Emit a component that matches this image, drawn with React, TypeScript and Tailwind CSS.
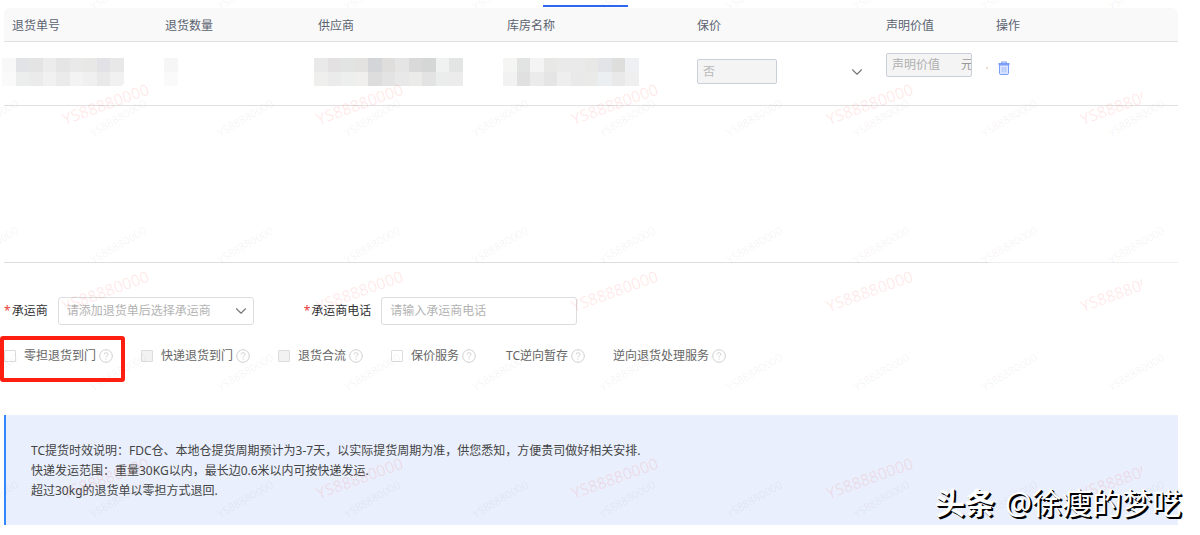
import React from 'react';
import { ChevronDown } from 'lucide-react';

const WATERMARK = 'YS88880000';

const idTiles = [
  '#f8f8f8', '#e2e3e6', '#e4e4e5', '#ececec', '#e5e5e5', '#e9e9e9', '#e8e8e7', '#e2e2e6', '#e8e8e8',
  '#fafafa', '#eceeee', '#ebebec', '#f1f1f1', '#ebebeb', '#f3f3f3', '#f0f0f0', '#e9e9e9', '#f1f1f1',
];
const qtyTiles = ['#f6f6f6', '#fafafa'];
const supplierTiles = [
  '#e9e9e9', '#e3e1e2', '#e1e4e3', '#e3e2e0', '#d4d5d8', '#dfdedc', '#e5e5e5', '#d9d9d9', '#d5d6d6', '#f0f1f1', '#e3e5e5',
  '#efefee', '#ebebeb', '#ecefee', '#f0efed', '#dddddd', '#e3e3e3', '#e8e8e9', '#ebebe9', '#e3e3e3', '#ebedec', '#ececec',
];
const warehouseTiles = [
  '#f5f5f4', '#e2e4e4', '#f4f4f5', '#e8e8e6', '#eaeaea', '#eaeaea', '#e8e8e6', '#e2e4e7', '#dededc', '#eff0f3',
  '#f2f2f2', '#e0e0e0', '#ebebeb', '#e5e5e5', '#eeeeee', '#e9e9e9', '#eaeae9', '#eceff1', '#e9e9e9', '#efefef',
];

const columns = [
  { title: '退货单号', width: 'w-[153px]' },
  { title: '退货数量', width: 'w-[153px]' },
  { title: '供应商', width: 'w-[189px]' },
  { title: '库房名称', width: 'w-[190px]' },
  { title: '保价', width: 'w-[189px]' },
  { title: '声明价值', width: 'w-[110px]' },
  { title: '操作', width: 'w-[190px]' },
];

const services = [
  { label: '零担退货到门', gap: 'mr-7', box: 'bg-white' },
  { label: '快递退货到门', gap: 'mr-7', box: 'bg-[#f2f2f2]' },
  { label: '退货合流', gap: 'mr-7', box: 'bg-[#f2f2f2]' },
  { label: '保价服务', gap: 'mr-[30px]', box: 'bg-white' },
  { label: 'TC逆向暂存', gap: 'mr-7', box: '' },
  { label: '逆向退货处理服务', gap: '', box: '' },
];

function Mosaic({ tiles, className }: { tiles: string[]; className: string }) {
  return (
    <div className={`grid h-7 grid-rows-2 overflow-hidden ${className}`}>
      {tiles.map((color, i) => (
        <span key={i} style={{ backgroundColor: color }} />
      ))}
    </div>
  );
}

function HelpIcon() {
  return (
    <svg viewBox="0 0 14 14" className="h-3.5 w-3.5 shrink-0" fill="none" stroke="#cfcfcf" aria-hidden="true">
      <circle cx="7" cy="7" r="6.3" />
      <path d="M5.1 5.6c0-1.2.8-1.9 1.9-1.9s1.9.7 1.9 1.7c0 1.3-1.9 1.4-1.9 2.8" />
      <path d="M7 9.3v1.2" />
    </svg>
  );
}

function TrashIcon() {
  return (
    <svg viewBox="0 0 12 14" className="h-3.5 w-3" fill="none" aria-hidden="true">
      <path d="M1.5 4h9v8.2a1.3 1.3 0 0 1-1.3 1.3H2.8a1.3 1.3 0 0 1-1.3-1.3z" fill="#dde6ff" stroke="#7d9ef8" />
      <path d="M.5 3h11" stroke="#7d9ef8" strokeWidth="2" />
      <path d="M3.8 2.2V1h4.4v1.2" stroke="#7d9ef8" strokeWidth="1.2" />
      <path d="M4.2 6v5.5M6 6v5.5M7.8 6v5.5" stroke="#9db6fb" strokeWidth="0.8" />
    </svg>
  );
}

function ReturnTable() {
  return (
    <table className="w-full table-fixed border-separate border-spacing-0 text-left">
      <thead>
        <tr className="h-[34px]">
          {columns.map((col) => (
            <th
              key={col.title}
              className={`${col.width} border-b border-[#e0e0e0] bg-[#f9f9f9] p-0 pt-0.5 pl-2 font-normal text-[#5b6371] first:rounded-tl-md last:rounded-tr-md`}
            >
              {col.title}
            </th>
          ))}
        </tr>
      </thead>
      <tbody>
        <tr className="h-16 align-top [&>td]:border-b [&>td]:border-[#e0e0e0]">
          <td className="pt-4">
            <Mosaic tiles={idTiles} className="-ml-0.5 w-[122px] grid-cols-9 rounded-br" />
          </td>
          <td className="pt-4 pl-[7px]">
            <Mosaic tiles={qtyTiles} className="w-3.5 grid-cols-1" />
          </td>
          <td className="pt-4 pl-1">
            <Mosaic tiles={supplierTiles} className="w-[149px] grid-cols-11" />
          </td>
          <td className="pt-4 pl-1">
            <Mosaic tiles={warehouseTiles} className="w-[136px] grid-cols-10" />
          </td>
          <td className="pt-[17px] pr-3 pl-2">
            <div className="flex items-center justify-between">
              <select
                disabled
                aria-label="保价"
                className="h-[25px] w-20 appearance-none rounded-xs border border-[#c9cfdb] bg-[#f4f4f4] px-[5px] text-[#b8b8b8] opacity-100"
              >
                <option>否</option>
              </select>
              <ChevronDown className="h-[18px] w-[18px] text-[#777]" strokeWidth={1.5} />
            </div>
          </td>
          <td className="pt-[11px] pl-2">
            <div className="flex h-6 w-[86px] items-center overflow-hidden rounded-xs border border-[#c9cfdb] bg-[#f4f4f4] pl-[5px] text-[#999]">
              <input
                disabled
                aria-label="声明价值"
                placeholder="声明价值"
                className="w-[69px] shrink-0 placeholder:text-[#b0b0b0]"
              />
              <span className="shrink-0">元</span>
            </div>
          </td>
          <td className="pt-[19px]">
            <div className="flex items-center gap-2.5">
              <span className="-ml-0.5 h-0.5 w-0.5 bg-[#ecdcc8]" />
              <button type="button" aria-label="删除">
                <TrashIcon />
              </button>
            </div>
          </td>
        </tr>
      </tbody>
    </table>
  );
}

function CarrierForm() {
  return (
    <div className="flex items-center">
      <label htmlFor="carrier" className="text-[#333]">
        <span className="mr-px text-[#e8403a]">*</span>承运商
      </label>
      <div className="relative ml-2.5">
        <select
          id="carrier"
          className="h-7 w-[196px] appearance-none rounded-[3px] border border-[#dcdcdc] px-2 text-[#b3b3b3]"
        >
          <option>请添加退货单后选择承运商</option>
        </select>
        <ChevronDown
          className="pointer-events-none absolute top-[5px] right-1 h-[18px] w-[18px] text-[#777]"
          strokeWidth={1.5}
        />
      </div>
      <label htmlFor="carrier-phone" className="ml-[50px] text-[#333]">
        <span className="mr-px text-[#e8403a]">*</span>承运商电话
      </label>
      <input
        id="carrier-phone"
        placeholder="请输入承运商电话"
        className="ml-2.5 h-7 w-[196px] rounded-[3px] border border-[#dcdcdc] px-2 pb-0.5 placeholder:text-[#b3b3b3]"
      />
    </div>
  );
}

function ServiceOptions() {
  return (
    <div className="relative flex h-5 items-center text-[#666]">
      {services.map((item) => (
        <div key={item.label} className={`flex items-center gap-[3px] ${item.gap}`}>
          <label className="flex items-center">
            {item.box && (
              <input
                type="checkbox"
                className={`mr-2 h-3 w-3 appearance-none rounded-[1px] border border-[#dcdcdc] ${item.box}`}
              />
            )}
            {item.label}
          </label>
          <HelpIcon />
        </div>
      ))}
      <div className="absolute -top-2.5 -left-1 h-[46px] w-[125px] rounded-[3px] border-4 border-[#ff1f10]" />
    </div>
  );
}

function Watermarks() {
  return (
    <div className="pointer-events-none absolute inset-0 overflow-hidden" aria-hidden="true">
      <div className="absolute -top-[72px] -left-[73px] grid w-[1273px] auto-rows-[127px] grid-cols-10 font-['Noto_Sans',sans-serif] text-[11px] text-black/[0.06]">
        {Array.from({ length: 50 }, (_, i) => (
          <span key={i} className="flex items-center justify-center">
            <span className="-rotate-[30deg]">{WATERMARK}</span>
          </span>
        ))}
      </div>
      <div className="absolute top-2.5 left-0 w-[1142px] overflow-hidden">
        <div className="-ml-[22px] grid w-[1273px] auto-rows-[187px] grid-cols-5 font-['Noto_Sans',sans-serif] text-base text-[#ff2020]/10">
          {Array.from({ length: 15 }, (_, i) => (
            <span key={i} className="flex items-center justify-center">
              <span className="-rotate-[20deg]">{WATERMARK}</span>
            </span>
          ))}
        </div>
      </div>
    </div>
  );
}

function App() {
  return (
    <div className="relative overflow-hidden bg-white font-['Noto_Sans','Noto_Sans_CJK_SC',sans-serif] text-xs">
      <main className="pr-[22px] pb-2.5 pl-1">
        <div className="flex h-2 items-end pl-[539px]">
          <div className="mb-px h-0.5 w-[85px] bg-[#2f66f0]" />
        </div>
        <ReturnTable />
        <div className="flex h-[157px] items-end">
          <div className="h-px w-[984px] bg-[#dedede]" />
          <div className="h-px flex-1 bg-[#eeeeee]" />
        </div>
        <div className="mt-[34px]">
          <CarrierForm />
        </div>
        <div className="mt-[21px]">
          <ServiceOptions />
        </div>
        <div className="mt-[49px] border-l-2 border-[#3388ff] bg-[#e9effc] pt-[26px] pb-6 pl-[25px] leading-5 text-[#444]">
          <p>TC提货时效说明：FDC仓、本地仓提货周期预计为3-7天，以实际提货周期为准，供您悉知，方便贵司做好相关安排.</p>
          <p>快递发运范围：重量30KG以内，最长边0.6米以内可按快递发运.</p>
          <p>超过30kg的退货单以零担方式退回.</p>
        </div>
      </main>
      <Watermarks />
      <div className="absolute right-[18px] bottom-3 flex items-center gap-2.5 text-[30px] leading-10 text-white [text-shadow:1px_1px_0_#000,2px_2px_0_#000]">
        <span className="font-bold">头条</span>
        <span>@徐瘦的梦呓</span>
      </div>
    </div>
  );
}

export default App;
